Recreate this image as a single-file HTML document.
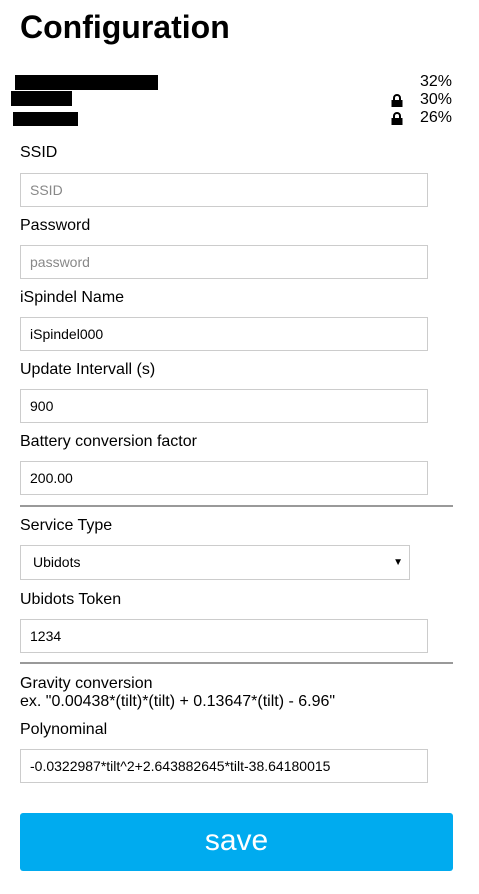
<!DOCTYPE html>
<html><head><style>
*{margin:0;padding:0;box-sizing:border-box}
body{width:479px;height:894px;background:#fff;font-family:"Liberation Sans",Arial,sans-serif;color:#000;position:relative;overflow:hidden}
.a{position:absolute}
h1{position:absolute;left:20px;top:8px;font-size:32px;font-weight:bold;line-height:38px}
.lbl{position:absolute;left:20px;font-size:16px;line-height:18px}
.in{position:absolute;left:20px;width:408px;height:34px;border:1px solid #ccc;font-size:14px;line-height:32px;padding-left:9px}
.ph{color:#888}
.bar{position:absolute;background:#000}
.pct{position:absolute;right:27px;font-size:16px;line-height:18px}
.hr{position:absolute;left:20px;width:433px;height:2px;background:#999}
.lock{position:absolute;left:391px;width:12px;height:10px}
</style></head><body>
<h1>Configuration</h1>
<div class="bar" style="left:15px;top:75px;width:143px;height:15px"></div>
<div class="bar" style="left:11px;top:91px;width:61px;height:15px"></div>
<div class="bar" style="left:13px;top:112px;width:65px;height:14px"></div>
<div class="pct" style="top:73px">32%</div>
<div class="pct" style="top:91px">30%</div>
<div class="pct" style="top:109px">26%</div>
<svg class="lock" style="top:94px;height:13px" viewBox="0 0 12 13"><path d="M3 6V4a3 3 0 0 1 6 0v2" stroke="#000" stroke-width="2" fill="none"/><rect x="0.5" y="6" width="11" height="7" fill="#000"/></svg>
<svg class="lock" style="top:112px;height:13px" viewBox="0 0 12 13"><path d="M3 6V4a3 3 0 0 1 6 0v2" stroke="#000" stroke-width="2" fill="none"/><rect x="0.5" y="6" width="11" height="7" fill="#000"/></svg>

<div class="lbl" style="top:144px">SSID</div>
<div class="in ph" style="top:173px">SSID</div>
<div class="lbl" style="top:217px">Password</div>
<div class="in ph" style="top:245px">password</div>
<div class="lbl" style="top:289px">iSpindel Name</div>
<div class="in" style="top:317px">iSpindel000</div>
<div class="lbl" style="top:361px">Update Intervall (s)</div>
<div class="in" style="top:389px">900</div>
<div class="lbl" style="top:433px">Battery conversion factor</div>
<div class="in" style="top:461px">200.00</div>
<div class="hr" style="top:505px"></div>
<div class="lbl" style="top:517px">Service Type</div>
<div class="in" style="top:545px;width:390px;height:35px;padding-left:12px;line-height:33px">Ubidots<span style="position:absolute;right:6px;font-size:10px">▼</span></div>
<div class="lbl" style="top:591px">Ubidots Token</div>
<div class="in" style="top:619px">1234</div>
<div class="hr" style="top:662px"></div>
<div class="lbl" style="top:675px">Gravity conversion</div>
<div class="lbl" style="top:693px">ex. "0.00438*(tilt)*(tilt) + 0.13647*(tilt) - 6.96"</div>
<div class="lbl" style="top:721px">Polynominal</div>
<div class="in" style="top:749px">-0.0322987*tilt^2+2.643882645*tilt-38.64180015</div>
<div class="a" style="left:20px;top:813px;width:433px;height:58px;background:#00abef;border-radius:3px;color:#fff;font-size:30px;text-align:center;line-height:56px">save</div>
</body></html>
